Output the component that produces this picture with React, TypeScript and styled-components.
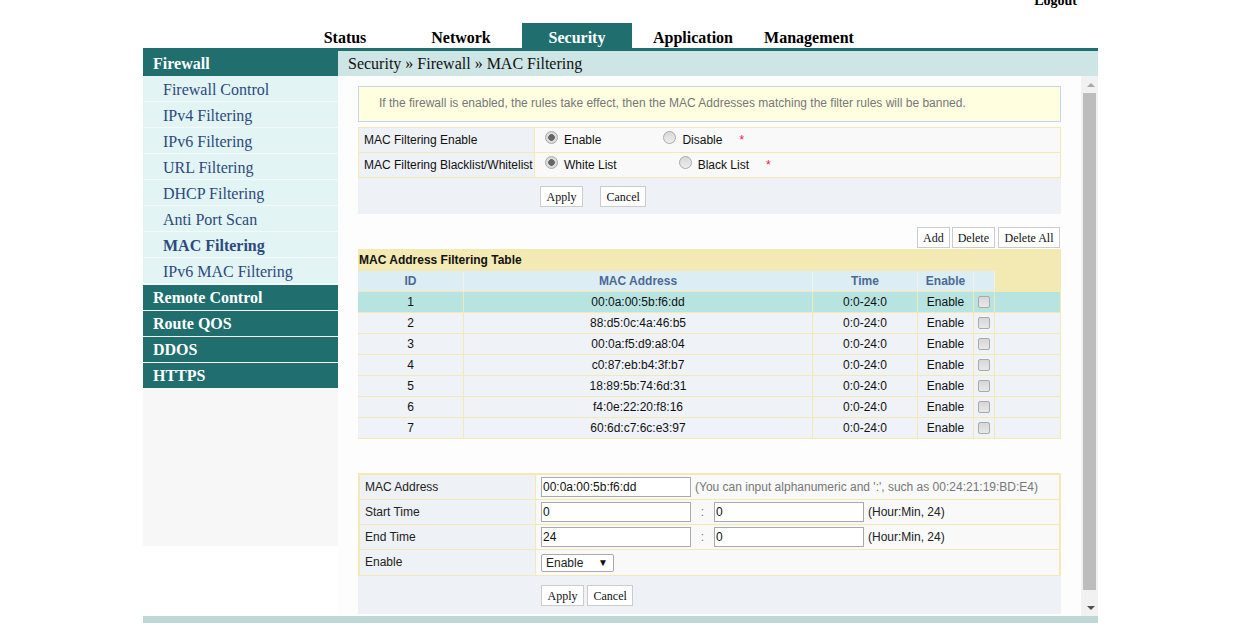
import React from 'react';
import styled, { createGlobalStyle } from 'styled-components';

const TEAL = '#206e6e';
const LINE = '#f4e9b4';
const SERIF = '"Liberation Serif", "Times New Roman", serif';
const SANS = '"Liberation Sans", Arial, sans-serif';

const menuTabs = ['Status', 'Network', 'Security', 'Application', 'Management'];
const firewallItems = [
  'Firewall Control',
  'IPv4 Filtering',
  'IPv6 Filtering',
  'URL Filtering',
  'DHCP Filtering',
  'Anti Port Scan',
  'MAC Filtering',
  'IPv6 MAC Filtering'
];
const otherGroups = ['Remote Control', 'Route QOS', 'DDOS', 'HTTPS'];
const filterRows = [
  '00:0a:00:5b:f6:dd',
  '88:d5:0c:4a:46:b5',
  '00:0a:f5:d9:a8:04',
  'c0:87:eb:b4:3f:b7',
  '18:89:5b:74:6d:31',
  'f4:0e:22:20:f8:16',
  '60:6d:c7:6c:e3:97'
];

const App: React.FC = () => {
  return (
    <Page>
      <GlobalStyle />
      <TopBar>
        <Logout href="#">Logout</Logout>
      </TopBar>
      <Nav>
        {menuTabs.map(tab => (
          <Tab key={tab} $active={tab === 'Security'}>
            {tab}
          </Tab>
        ))}
      </Nav>
      <Body>
        <Sidebar>
          <GroupTitle $first>Firewall</GroupTitle>
          <SubList>
            {firewallItems.map(item => (
              <SubItem key={item} $active={item === 'MAC Filtering'}>
                {item}
              </SubItem>
            ))}
          </SubList>
          {otherGroups.map(group => (
            <GroupTitle key={group}>{group}</GroupTitle>
          ))}
        </Sidebar>
        <Content>
          <Breadcrumb>Security » Firewall » MAC Filtering</Breadcrumb>
          <ScrollArea>
            <Main>
              <Notice>
                If the firewall is enabled, the rules take effect, then the MAC Addresses matching the
                filter rules will be banned.
              </Notice>

              <SettingsGrid>
                <SettingLabel>MAC Filtering Enable</SettingLabel>
                <SettingValue>
                  <Radio name="enable" defaultChecked />
                  <span>Enable</span>
                  <Radio name="enable" $spaced />
                  <span>Disable</span>
                  <Required>*</Required>
                </SettingValue>
                <SettingLabel>MAC Filtering Blacklist/Whitelist</SettingLabel>
                <SettingValue>
                  <Radio name="mode" defaultChecked />
                  <span>White List</span>
                  <Radio name="mode" $spaced />
                  <span>Black List</span>
                  <Required>*</Required>
                </SettingValue>
              </SettingsGrid>
              <ButtonBar $height={36} $top={8} $pad={182} $gap={17}>
                <PlainButton>Apply</PlainButton>
                <PlainButton>Cancel</PlainButton>
              </ButtonBar>

              <TableActions>
                <PlainButton>Add</PlainButton>
                <PlainButton>Delete</PlainButton>
                <PlainButton>Delete All</PlainButton>
              </TableActions>

              <FilterTable>
                <colgroup>
                  <col width={106} />
                  <col width={349} />
                  <col width={105} />
                  <col width={56} />
                  <col width={21} />
                  <col width={66} />
                </colgroup>
                <thead>
                  <tr>
                    <TableTitle colSpan={6}>MAC Address Filtering Table</TableTitle>
                  </tr>
                  <tr>
                    <HeadCell>ID</HeadCell>
                    <HeadCell>MAC Address</HeadCell>
                    <HeadCell>Time</HeadCell>
                    <HeadCell>Enable</HeadCell>
                    <HeadCell />
                    <BlankHead />
                  </tr>
                </thead>
                <tbody>
                  {filterRows.map((mac, i) => (
                    <Row key={mac} $selected={i === 0}>
                      <td>{i + 1}</td>
                      <td>{mac}</td>
                      <td>0:0-24:0</td>
                      <td>Enable</td>
                      <td>
                        <Check />
                      </td>
                      <td />
                    </Row>
                  ))}
                </tbody>
              </FilterTable>

              <FormBox>
                <FormLabel>MAC Address</FormLabel>
                <FormValue>
                  <TextInput defaultValue="00:0a:00:5b:f6:dd" />
                  <Hint $muted>(You can input alphanumeric and ':', such as 00:24:21:19:BD:E4)</Hint>
                </FormValue>
                <FormLabel>Start Time</FormLabel>
                <FormValue>
                  <TextInput defaultValue="0" />
                  <Colon>:</Colon>
                  <TextInput defaultValue="0" />
                  <Hint>(Hour:Min, 24)</Hint>
                </FormValue>
                <FormLabel>End Time</FormLabel>
                <FormValue>
                  <TextInput defaultValue="24" />
                  <Colon>:</Colon>
                  <TextInput defaultValue="0" />
                  <Hint>(Hour:Min, 24)</Hint>
                </FormValue>
                <FormLabel $last>Enable</FormLabel>
                <FormValue $last>
                  <SelectWrap>
                    <Select defaultValue="Enable">
                      <option>Enable</option>
                      <option>Disable</option>
                    </Select>
                  </SelectWrap>
                </FormValue>
              </FormBox>
              <ButtonBar $height={38} $top={9} $pad={183} $gap={3}>
                <PlainButton>Apply</PlainButton>
                <PlainButton>Cancel</PlainButton>
              </ButtonBar>
            </Main>
            <ScrollTrack>
              <ScrollArrow $dir="up" />
              <ScrollThumb />
              <ScrollArrow $dir="down" />
            </ScrollTrack>
          </ScrollArea>
        </Content>
      </Body>
      <Footer />
    </Page>
  );
};

const GlobalStyle = createGlobalStyle`
  html, body {
    margin: 0;
    padding: 0;
    height: 100%;
    overflow: hidden;
    background: #fff;
  }
  * {
    box-sizing: border-box;
  }
`;

const Page = styled.div`
  width: 955px;
  margin-left: 143px;
  font-family: ${SANS};
  font-size: 12px;
  color: #222;
`;

const TopBar = styled.div`
  display: flex;
  justify-content: flex-end;
  height: 23px;
  padding-right: 21px;
  overflow: hidden;
`;

const Logout = styled.a`
  margin-top: -7px;
  font-family: ${SERIF};
  font-size: 14px;
  font-weight: bold;
  line-height: 16px;
  color: #000;
  text-decoration: none;
`;

const Nav = styled.div`
  display: flex;
  gap: 6px;
  height: 25px;
  padding-left: 147px;
`;

const Tab = styled.div<{ $active?: boolean }>`
  width: 110px;
  padding-top: 6px;
  background: ${p => (p.$active ? TEAL : 'transparent')};
  color: ${p => (p.$active ? '#fff' : '#000')};
  font-family: ${SERIF};
  font-size: 16px;
  font-weight: bold;
  line-height: 18px;
  text-align: center;
`;

const Body = styled.div`
  display: flex;
  align-items: flex-start;
`;

const Sidebar = styled.div`
  width: 195px;
  height: 498px;
  background: #f7f7f7;
`;

const GroupTitle = styled.div<{ $first?: boolean }>`
  height: ${p => (p.$first ? 28 : 25)}px;
  margin-bottom: ${p => (p.$first ? 0 : 1)}px;
  padding-left: 10px;
  background: ${TEAL};
  color: #fff;
  font-family: ${SERIF};
  font-size: 16px;
  font-weight: bold;
  line-height: ${p => (p.$first ? 31 : 25)}px;
`;

const SubList = styled.div`
  padding-bottom: 1px;
`;

const SubItem = styled.div<{ $active?: boolean }>`
  height: 26px;
  padding-left: 20px;
  border-bottom: 1px solid #f3fafa;
  background: #e2f4f4;
  color: #2d4a7e;
  font-family: ${SERIF};
  font-size: 16px;
  font-weight: ${p => (p.$active ? 'bold' : 'normal')};
  line-height: 28px;
`;

const Content = styled.div`
  width: 760px;
  border-top: 3px solid ${TEAL};
`;

const Breadcrumb = styled.div`
  height: 25px;
  padding-left: 10px;
  background: #cde5e5;
  color: #111;
  font-family: ${SERIF};
  font-size: 16px;
  line-height: 25px;
`;

const ScrollArea = styled.div`
  display: flex;
  height: 540px;
`;

const Main = styled.div`
  flex: 1;
  padding: 10px 20px 0;
  background: #fdfdfd;
`;

const Notice = styled.div`
  height: 36px;
  padding-left: 20px;
  border: 1px solid #c5d6e8;
  background: #ffffe0;
  color: #777;
  line-height: 33px;
`;

const SettingsGrid = styled.div`
  display: grid;
  grid-template-columns: 176px 1fr;
  grid-template-rows: 25px 24px;
  margin-top: 5px;
  border: 1px solid ${LINE};
`;

const SettingLabel = styled.div`
  padding-left: 5px;
  border-right: 1px solid ${LINE};
  border-bottom: 1px solid ${LINE};
  background: #eef1f5;
  color: #111;
  line-height: 24px;
  white-space: nowrap;

  &:nth-last-child(2) {
    border-bottom: 0;
  }
`;

const SettingValue = styled.div`
  display: flex;
  align-items: center;
  padding-left: 10px;
  border-bottom: 1px solid ${LINE};
  background: #f9f9f9;
  color: #111;

  &:last-child {
    border-bottom: 0;
  }
`;

const Radio = styled.input.attrs({ type: 'radio' })<{ $spaced?: boolean }>`
  appearance: none;
  width: 13px;
  height: 13px;
  margin: -5px 6px 0 ${p => (p.$spaced ? 62 : 0)}px;
  border: 1px solid #aaa;
  border-radius: 50%;
  background: linear-gradient(#d8d8d8, #ededed);

  &:checked {
    background: radial-gradient(circle, #666 0 3px, #dcdcdc 3.6px);
  }
`;

const Required = styled.span`
  margin-left: 17px;
  color: #f01050;
`;

const PlainButton = styled.button`
  height: 21px;
  padding: 0 5px;
  border: 1px solid #ccc;
  background: #fff;
  color: #111;
  font-family: ${SERIF};
  font-size: 12px;
  line-height: 18px;
  white-space: nowrap;
`;

const ButtonBar = styled.div<{ $height: number; $top: number; $pad: number; $gap: number }>`
  display: flex;
  gap: ${p => p.$gap}px;
  height: ${p => p.$height}px;
  padding: ${p => p.$top}px 0 0 ${p => p.$pad}px;
  background: #eef1f5;

  ${PlainButton} {
    padding: 0 5.5px;
  }
`;

const TableActions = styled.div`
  display: flex;
  justify-content: flex-end;
  gap: 2px;
  height: 22px;
  margin-top: 13px;
  padding-right: 1px;

  ${PlainButton}:last-child {
    margin-left: 1px;
    padding: 0 5.5px;
  }
`;

const FilterTable = styled.table`
  width: 703px;
  table-layout: fixed;
  border-collapse: separate;
  border-spacing: 0;
  font-size: 12px;
`;

const TableTitle = styled.th`
  height: 22px;
  padding: 0 0 0 1px;
  background: #f2e9b3;
  color: #111;
  font-size: 12px;
  font-weight: bold;
  text-align: left;
`;

const HeadCell = styled.th`
  height: 21px;
  padding: 0;
  border-right: 1px solid #eef3ef;
  border-bottom: 1px solid ${LINE};
  background: #dcedf3;
  color: #4a6a96;
  font-size: 12px;
  font-weight: bold;
  text-align: center;
`;

const BlankHead = styled.th`
  background: #f2e9b3;
  padding: 0;
`;

const Row = styled.tr<{ $selected?: boolean }>`
  td {
    height: 21px;
    padding: 0;
    border-right: 1px solid ${LINE};
    border-bottom: 1px solid ${LINE};
    background: ${p => (p.$selected ? '#b7e3e1' : '#eff2f7')};
    color: #111;
    text-align: center;
  }
`;

const Check = styled.input.attrs({ type: 'checkbox' })`
  display: block;
  appearance: none;
  width: 12px;
  height: 12px;
  margin: 0 0 0 4px;
  border: 1px solid #aaa;
  border-radius: 2px;
  background: linear-gradient(#d6d6d6, #e8e8e8);
`;

const FormBox = styled.div`
  display: grid;
  grid-template-columns: 176px 1fr;
  height: 103px;
  margin-top: 34px;
  border: 2px solid ${LINE};
`;

const FormLabel = styled.div<{ $last?: boolean }>`
  height: 25px;
  padding-left: 5px;
  border-right: 1px solid ${LINE};
  border-bottom: ${p => (p.$last ? 0 : 1)}px solid ${LINE};
  background: #eef1f5;
  color: #222;
  line-height: 24px;
`;

const FormValue = styled.div<{ $last?: boolean }>`
  display: flex;
  align-items: center;
  height: 25px;
  padding-left: 5px;
  border-bottom: ${p => (p.$last ? 0 : 1)}px solid ${LINE};
  background: #f9f9f9;
`;

const TextInput = styled.input`
  width: 150px;
  height: 20px;
  padding: 0 1px;
  border: 1px solid #aaa;
  background: #fff;
  color: #111;
  font-family: ${SANS};
  font-size: 12px;
`;

const Colon = styled.span`
  width: 23px;
  color: #777;
  text-align: center;
`;

const Hint = styled.span<{ $muted?: boolean }>`
  margin-left: 4px;
  color: ${p => (p.$muted ? '#777' : '#222')};
  white-space: nowrap;
`;

const SelectWrap = styled.div`
  position: relative;
  width: 73px;
  height: 18px;

  &::after {
    content: '▼';
    position: absolute;
    top: 3px;
    right: 6px;
    color: #111;
    font-size: 10px;
    line-height: 12px;
    pointer-events: none;
  }
`;

const Select = styled.select`
  appearance: none;
  display: block;
  width: 100%;
  height: 100%;
  padding: 0 0 0 4px;
  border: 1px solid #aaa;
  border-radius: 2px;
  background: #fff;
  color: #222;
  font-family: ${SANS};
  font-size: 12px;
`;

const ScrollTrack = styled.div`
  display: flex;
  flex-direction: column;
  width: 17px;
  background: #f1f1f1;
`;

const ScrollArrow = styled.div<{ $dir: 'up' | 'down' }>`
  display: flex;
  align-items: center;
  justify-content: center;
  height: 17px;
  padding-left: 2px;

  &::before {
    content: '';
    border-left: 4px solid transparent;
    border-right: 4px solid transparent;
    border-${p => (p.$dir === 'up' ? 'bottom' : 'top')}: 4px solid ${p => (p.$dir === 'up' ? '#a8a8a8' : '#505050')};
  }

  &:last-child {
    margin-top: 9px;
  }
`;

const ScrollThumb = styled.div`
  width: 13px;
  height: 497px;
  margin-left: 2px;
  background: #bdbdbd;
`;

const Footer = styled.div`
  height: 7px;
  background: #c0d8d5;
`;

export default App;
